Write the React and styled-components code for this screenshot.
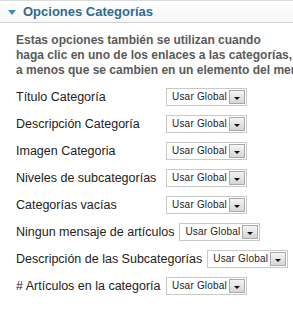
import React from 'react';
import styled, { createGlobalStyle } from 'styled-components';

const GlobalStyle = createGlobalStyle`
	body {
		margin: 0;
		background: #ffffff;
		overflow: hidden;
		font-family: 'Liberation Sans', Arial, sans-serif;
	}
`;

const rows = [
	'Título Categoría',
	'Descripción Categoría',
	'Imagen Categoria',
	'Niveles de subcategorías',
	'Categorías vacías',
	'Ningun mensaje de artículos',
	'Descripción de las Subcategorías',
	'# Artículos en la categoría',
];

export default function App() {
	return (
		<React.Fragment>
			<GlobalStyle />
			<Panel>
				<Header>
					<Arrow />
					<h3>Opciones Categorías</h3>
				</Header>
				<Intro>
					Estas opciones también se utilizan cuando
					<br />
					haga clic en uno de los enlaces a las categorías,
					<br />
					a menos que se cambien en un elemento del menú.
				</Intro>
				<List>
					{rows.map((label) => (
						<Row key={label}>
							<Label>{label}</Label>
							<Select>
								<span>Usar Global</span>
								<DropButton />
							</Select>
						</Row>
					))}
				</List>
			</Panel>
		</React.Fragment>
	);
}

const Panel = styled.div`
	width: 293px;
	height: 317px;
	overflow: hidden;
`;

const Header = styled.div`
	display: flex;
	align-items: center;
	height: 21px;
	padding-left: 8px;
	border-top: 1px solid #dcdcdc;
	border-bottom: 1px solid #d0d0d0;
	background: linear-gradient(#ffffff, #f6f6f6);

	h3 {
		margin: 0 0 0 7px;
		font-size: 13px;
		font-weight: bold;
		color: #2e6c8e;
		white-space: nowrap;
	}
`;

const Arrow = styled.span`
	width: 0;
	height: 0;
	margin-top: 1px;
	border-left: 4px solid transparent;
	border-right: 4px solid transparent;
	border-top: 5px solid #3a8cc0;
`;

const Intro = styled.p`
	margin: 0;
	padding: 10px 0 0 16px;
	font-size: 12px;
	line-height: 15px;
	font-weight: bold;
	color: #5a5a5a;
	white-space: nowrap;
`;

const List = styled.div`
	display: flex;
	flex-direction: column;
	padding: 5px 0 0 16px;
`;

const Row = styled.div`
	display: flex;
	align-items: center;
	gap: 5px;
	height: 27px;
`;

const Label = styled.span`
	min-width: 145px;
	font-size: 12.5px;
	color: #222;
	white-space: nowrap;
`;

const Select = styled.div`
	display: flex;
	align-items: center;
	justify-content: space-between;
	box-sizing: border-box;
	width: 81px;
	height: 18px;
	padding: 0 1px 0 5px;
	border: 1px solid #c8c8c8;
	background: #fff;
	flex-shrink: 0;

	span {
		font-family: 'Liberation Sans', Arial, sans-serif;
		font-size: 10px;
		letter-spacing: 0.2px;
		color: #222;
		white-space: nowrap;
	}
`;

const DropButton = styled.div`
	position: relative;
	box-sizing: border-box;
	width: 16px;
	height: 14px;
	border: 1px solid #a9a9a9;
	background: linear-gradient(#f4f4f4, #d6d6d6);

	&::after {
		content: '';
		position: absolute;
		left: 4px;
		top: 6px;
		border-left: 3px solid transparent;
		border-right: 3px solid transparent;
		border-top: 3px solid #111;
	}
`;
